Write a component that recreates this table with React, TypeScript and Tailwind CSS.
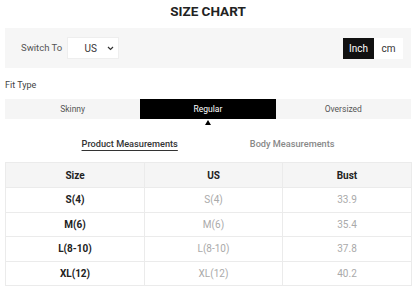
import React, { useState } from 'react';

const rows = [
  { size: 'S(4)', us: 'S(4)', bust: '33.9' },
  { size: 'M(6)', us: 'M(6)', bust: '35.4' },
  { size: 'L(8-10)', us: 'L(8-10)', bust: '37.8' },
  { size: 'XL(12)', us: 'XL(12)', bust: '40.2' },
];

const fits = ['Skinny', 'Regular', 'Oversized'];

export default function App() {
  const [fit, setFit] = useState('Regular');
  const [unit, setUnit] = useState<'inch' | 'cm'>('inch');
  const [tab, setTab] = useState<'product' | 'body'>('product');

  return (
    <div className="w-[416px] h-[289px] overflow-hidden bg-white font-['Roboto',sans-serif] text-[#333]">
      <h2 className="text-center text-[13.5px] font-bold leading-[20px] pt-[1px] text-[#222]">SIZE CHART</h2>

      <div className="mx-[5px] mt-[7px] h-[40px] bg-[#f6f6f6] flex items-center justify-between pl-[16px] pr-[8px]">
        <div className="flex items-center">
          <span className="w-[46px] text-[9.5px] text-[#555]">Switch To</span>
          <div className="w-[52px] h-[22px] bg-white border border-[#eee] flex items-center justify-end pr-[4px] gap-[10px]">
            <span className="text-[10px] text-[#333]">US</span>
            <svg width="7" height="5" viewBox="0 0 7 5" fill="none">
              <path d="M1 1l2.5 2.5L6 1" stroke="#333" strokeWidth="1.2" />
            </svg>
          </div>
        </div>
        <div className="flex h-[21px]">
          <button
            type="button"
            onClick={() => setUnit('inch')}
            className={`w-[31px] text-[10px] ${unit === 'inch' ? 'bg-[#111] text-white' : 'bg-white text-[#333]'}`}
          >
            Inch
          </button>
          <button
            type="button"
            onClick={() => setUnit('cm')}
            className={`w-[29px] text-[10px] ${unit === 'cm' ? 'bg-[#111] text-white' : 'bg-white text-[#333]'}`}
          >
            cm
          </button>
        </div>
      </div>

      <div className="px-[5px] mt-[11px] text-[9px] leading-[13px] text-[#444]">Fit Type</div>

      <div className="mx-[5px] mt-[7px] grid grid-cols-3 h-[20px] bg-[#f5f5f5]">
        {fits.map((f) => (
          <button
            key={f}
            type="button"
            onClick={() => setFit(f)}
            className={`relative text-[8.5px] ${fit === f ? 'bg-black text-white' : 'text-[#555]'}`}
          >
            {f}
            {fit === f && (
              <span className="absolute left-1/2 -translate-x-1/2 top-[21px] w-0 h-0 border-l-[3px] border-r-[3px] border-b-[5px] border-l-transparent border-r-transparent border-b-black" />
            )}
          </button>
        ))}
      </div>

      <div className="mt-[18px] flex justify-center gap-[72px] text-[9.2px] font-medium leading-[14px]">
        <button
          type="button"
          onClick={() => setTab('product')}
          className={tab === 'product' ? 'text-[#333] underline underline-offset-[3px]' : 'text-[#888]'}
        >
          Product Measurements
        </button>
        <button
          type="button"
          onClick={() => setTab('body')}
          className={tab === 'body' ? 'text-[#333] underline underline-offset-[3px]' : 'text-[#888]'}
        >
          Body Measurements
        </button>
      </div>

      <table className="mx-[5px] mt-[11px] w-[406px] border-collapse text-[10px] table-fixed">
        <colgroup>
          <col className="w-[139px]" />
          <col className="w-[138px]" />
          <col className="w-[129px]" />
        </colgroup>
        <thead>
          <tr className="h-[25px] bg-[#f5f5f5]">
            <th className="border border-[#ebebeb] font-bold text-[#222]">Size</th>
            <th className="border border-[#ebebeb] font-bold text-[#222]">US</th>
            <th className="border border-[#ebebeb] font-bold text-[#222]">Bust</th>
          </tr>
        </thead>
        <tbody>
          {rows.map((r) => (
            <tr key={r.size} className="h-[24.5px]">
              <td className="border border-[#ebebeb] text-center font-bold text-[#222]">{r.size}</td>
              <td className="border border-[#ebebeb] text-center text-[#aaa]">{r.us}</td>
              <td className="border border-[#ebebeb] text-center text-[#aaa]">{r.bust}</td>
            </tr>
          ))}
        </tbody>
      </table>
    </div>
  );
}
